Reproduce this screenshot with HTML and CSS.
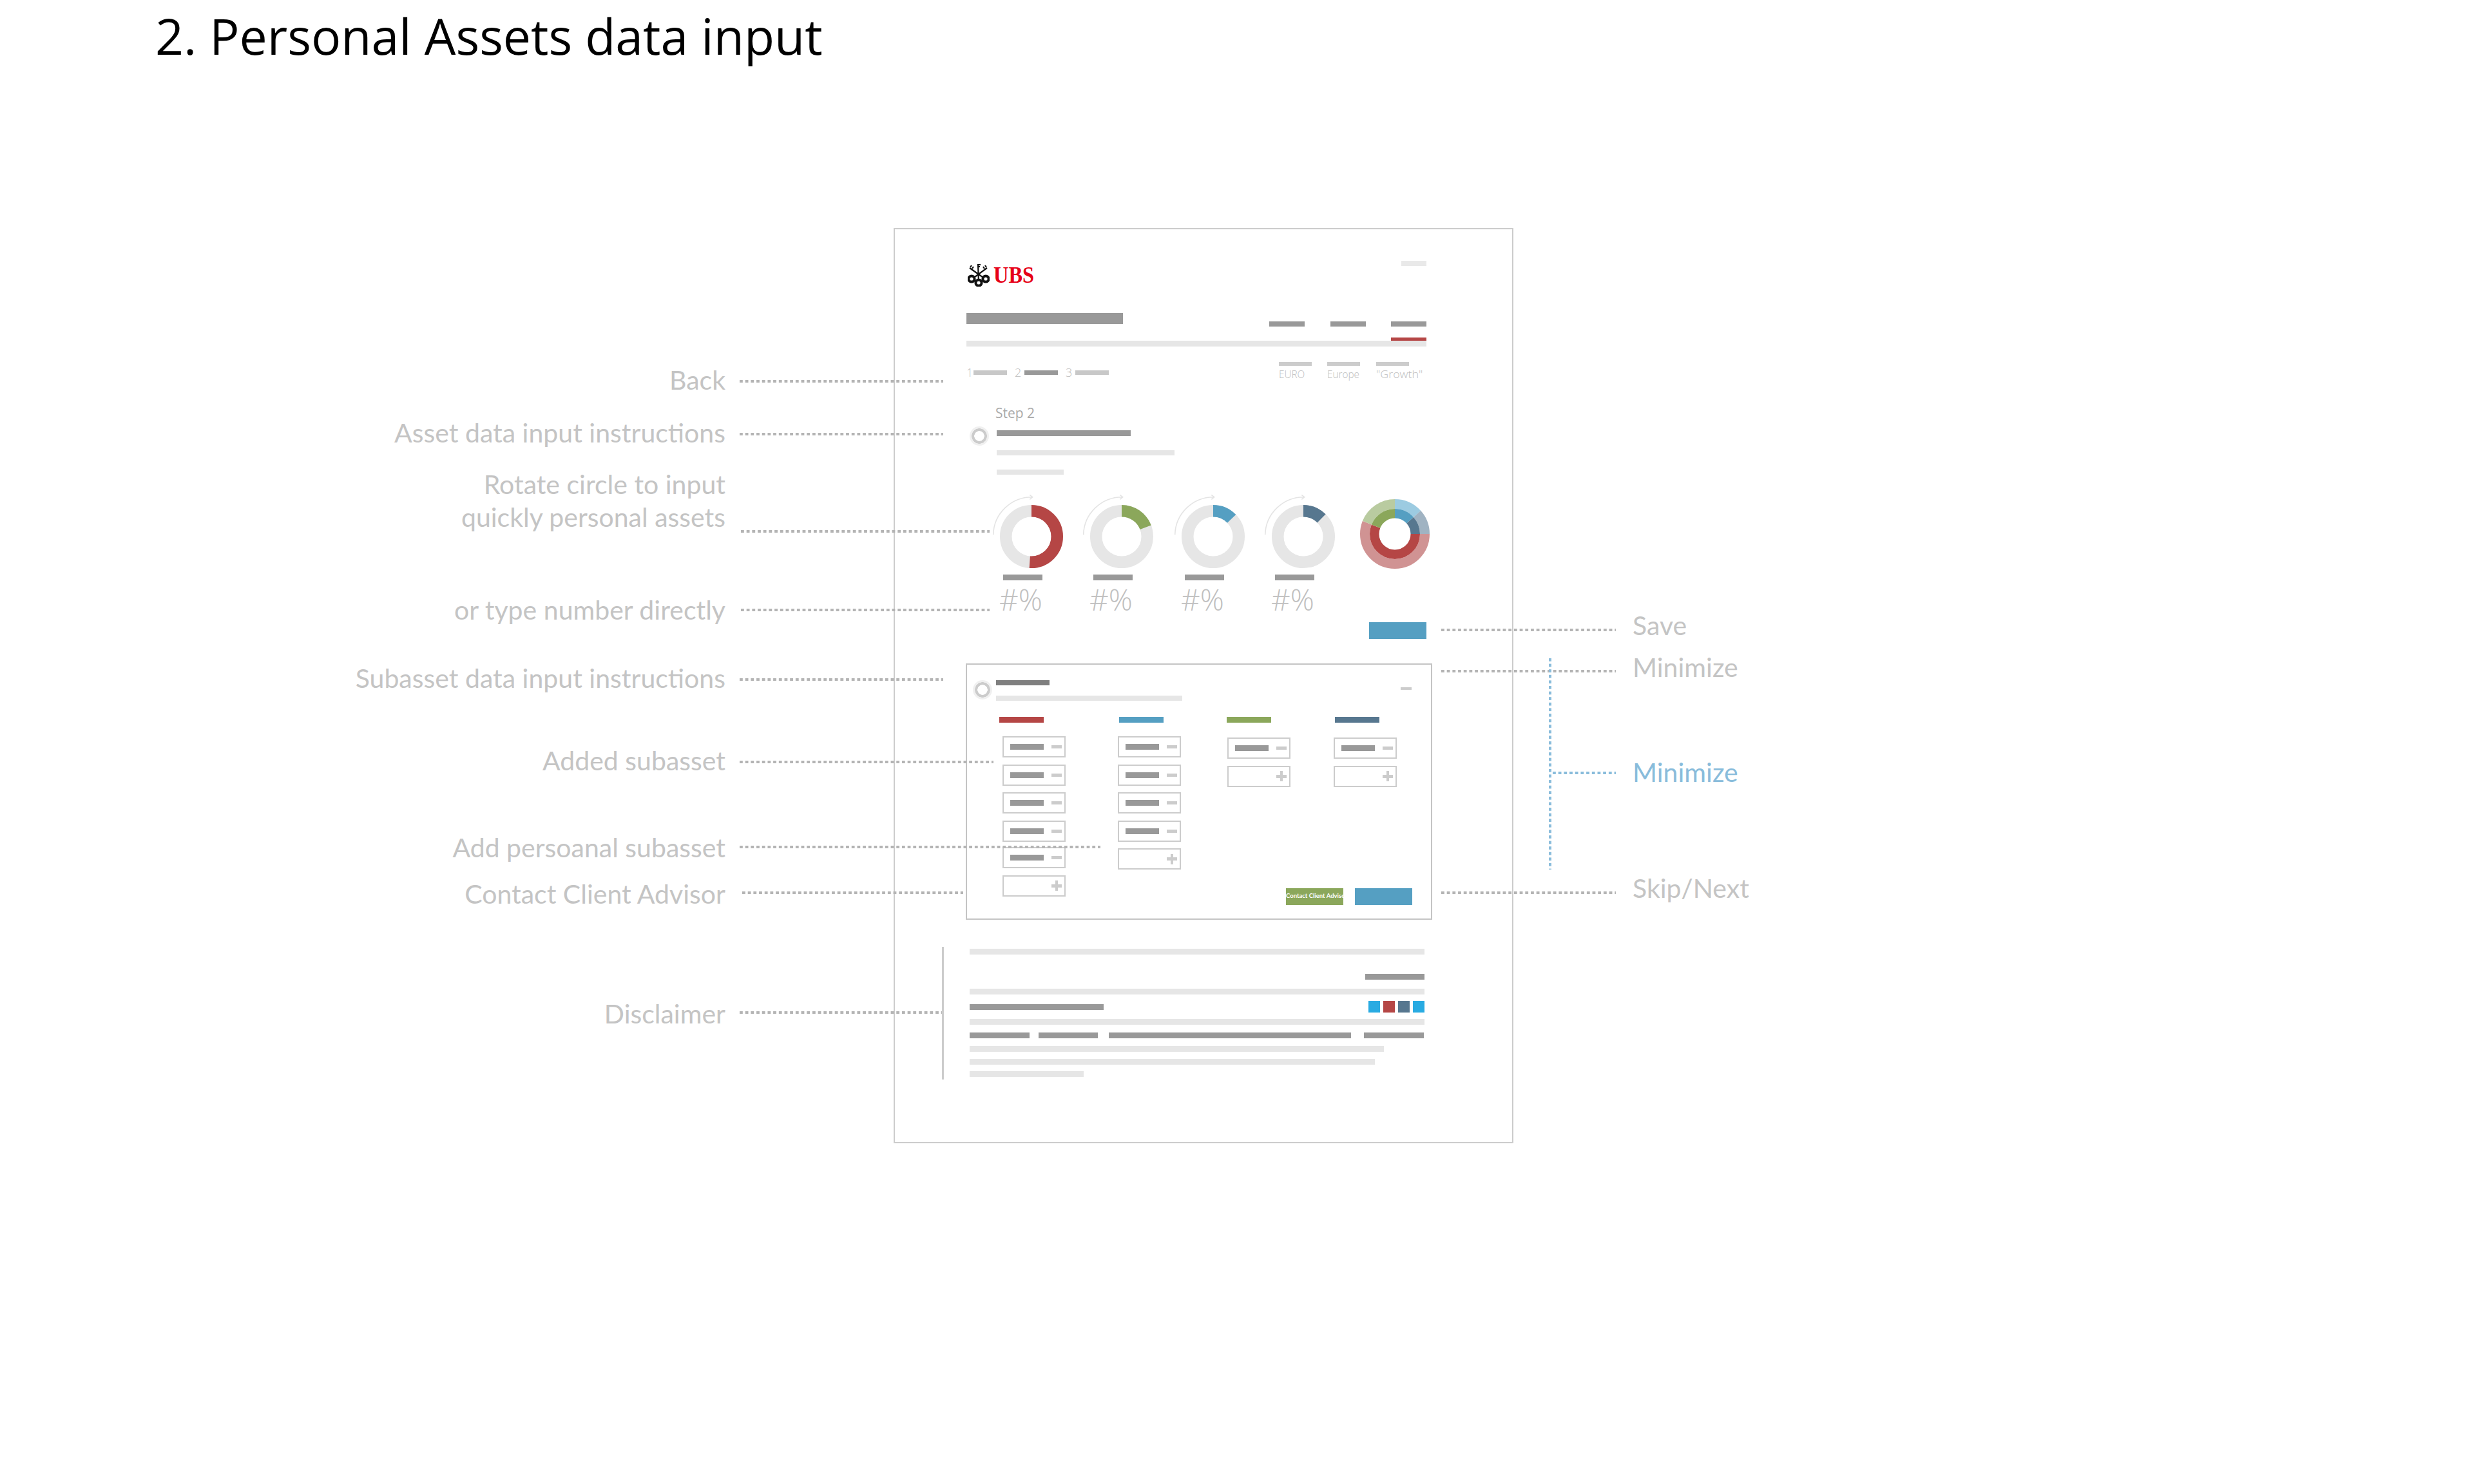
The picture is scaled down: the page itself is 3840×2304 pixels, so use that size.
FILE: index.html
```html
<!DOCTYPE html>
<html lang="en">
<head>
<meta charset="utf-8">
<title>2. Personal Assets data input</title>
<link rel="stylesheet" href="styles.css">
</head>
<body>
<main class="canvas">
  <h1 class="title">2. Personal Assets data input</h1>

  <section class="sheet">
    <header class="brand-row">
      <div class="logo">
        <svg class="keys" viewBox="0 0 34 36" aria-hidden="true">
          <g class="key-shaft">
            <path d="M7 24 30 7M27 24 3 7M17 30 16 1"/>
            <path d="M16 2h4M16 5h3M27 3l2 3M24 5l2 3M6 3 4 6M9 5 7 8"/>
          </g>
          <g class="key-bow">
            <circle cx="6" cy="24" r="4.6"/>
            <circle cx="28" cy="24" r="4.6"/>
            <circle cx="17" cy="30" r="4.6"/>
          </g>
        </svg>
        <span class="logo-word">UBS</span>
      </div>
      <span class="chip"></span>
    </header>

    <div class="head-row">
      <span class="bar bar-title"></span>
      <nav class="tabs">
        <div class="tab"><span class="bar bar-tab"></span></div>
        <div class="tab"><span class="bar bar-tab"></span></div>
        <div class="tab tab-active"><span class="bar bar-tab"></span></div>
      </nav>
    </div>
    <div class="rule"></div>

    <div class="meta-row">
      <ol class="steps">
        <li class="step"><span class="num num-first">1</span><span class="step-bar"></span></li>
        <li class="step"><span class="num">2</span><span class="step-bar step-bar-on"></span></li>
        <li class="step"><span class="num">3</span><span class="step-bar"></span></li>
      </ol>
      <div class="meta">
        <div class="meta-item"><span class="meta-bar"></span><span class="meta-text">EURO</span></div>
        <div class="meta-item"><span class="meta-bar"></span><span class="meta-text">Europe</span></div>
        <div class="meta-item"><span class="meta-bar"></span><span class="meta-text meta-text-wide">"Growth"</span></div>
      </div>
    </div>

    <p class="step-label">Step 2</p>
    <div class="instr">
      <span class="radio"></span>
      <div class="instr-lines">
        <span class="bar bar-i1"></span>
        <span class="line line-i2"></span>
        <span class="line line-i3"></span>
      </div>
    </div>

    <div class="donuts">
      <figure class="donut-card">
        <svg class="donut" viewBox="-49 -49 98 98" aria-hidden="true">
          <path class="turn" d="M-59.3-2.7A60 60 0 0 1 1.7-61.3M-2.7-64.7 1.7-61.3-2.7-57.7"/>
          <g transform="rotate(-90)">
            <circle class="ring track" r="39.75"/>
            <circle class="ring c-red" r="39.75" pathLength="360" stroke-dasharray="184 360"/>
          </g>
        </svg>
        <span class="bar bar-donut"></span>
        <span class="pct">#%</span>
      </figure>
      <figure class="donut-card card-2">
        <svg class="donut" viewBox="-49 -49 98 98" aria-hidden="true">
          <path class="turn" d="M-59.3-2.7A60 60 0 0 1 1.7-61.3M-2.7-64.7 1.7-61.3-2.7-57.7"/>
          <g transform="rotate(-90)">
            <circle class="ring track" r="39.75"/>
            <circle class="ring c-green" r="39.75" pathLength="360" stroke-dasharray="69 360"/>
          </g>
        </svg>
        <span class="bar bar-donut"></span>
        <span class="pct">#%</span>
      </figure>
      <figure class="donut-card card-3">
        <svg class="donut" viewBox="-49 -49 98 98" aria-hidden="true">
          <path class="turn" d="M-59.3-2.7A60 60 0 0 1 1.7-61.3M-2.7-64.7 1.7-61.3-2.7-57.7"/>
          <g transform="rotate(-90)">
            <circle class="ring track" r="39.75"/>
            <circle class="ring c-blue" r="39.75" pathLength="360" stroke-dasharray="46 360"/>
          </g>
        </svg>
        <span class="bar bar-donut"></span>
        <span class="pct">#%</span>
      </figure>
      <figure class="donut-card card-4">
        <svg class="donut" viewBox="-49 -49 98 98" aria-hidden="true">
          <path class="turn" d="M-59.3-2.7A60 60 0 0 1 1.7-61.3M-2.7-64.7 1.7-61.3-2.7-57.7"/>
          <g transform="rotate(-90)">
            <circle class="ring track" r="39.75"/>
            <circle class="ring c-slate" r="39.75" pathLength="360" stroke-dasharray="45 360"/>
          </g>
        </svg>
        <span class="bar bar-donut"></span>
        <span class="pct">#%</span>
      </figure>
      <svg class="summary" viewBox="-54 -54 108 108" aria-hidden="true">
        <g transform="rotate(-90)">
          <circle class="arc-out c-blue-soft" r="46.5" pathLength="360" stroke-dasharray="48 312"/>
          <circle class="arc-out c-slate-soft" r="46.5" pathLength="360" stroke-dasharray="42 318" stroke-dashoffset="-48"/>
          <circle class="arc-out c-red-soft" r="46.5" pathLength="360" stroke-dasharray="202 158" stroke-dashoffset="-90"/>
          <circle class="arc-out c-green-soft" r="46.5" pathLength="360" stroke-dasharray="68 292" stroke-dashoffset="-292"/>
          <circle class="arc-in c-blue" r="31.75" pathLength="360" stroke-dasharray="48 312"/>
          <circle class="arc-in c-slate" r="31.75" pathLength="360" stroke-dasharray="42 318" stroke-dashoffset="-48"/>
          <circle class="arc-in c-red" r="31.75" pathLength="360" stroke-dasharray="202 158" stroke-dashoffset="-90"/>
          <circle class="arc-in c-green" r="31.75" pathLength="360" stroke-dasharray="68 292" stroke-dashoffset="-292"/>
        </g>
      </svg>
    </div>

    <div class="save-row"><span class="btn btn-save"></span></div>

    <section class="panel">
      <div class="panel-head">
        <span class="radio"></span>
        <div class="panel-lines">
          <span class="bar bar-p1"></span>
          <span class="line line-p2"></span>
        </div>
        <span class="minimize"></span>
      </div>
      <div class="cols">
        <div class="col col-1">
          <span class="col-head h-red"></span>
          <div class="fields">
            <div class="field"><span class="field-bar"></span><span class="field-minus"></span></div>
            <div class="field"><span class="field-bar"></span><span class="field-minus"></span></div>
            <div class="field"><span class="field-bar"></span><span class="field-minus"></span></div>
            <div class="field"><span class="field-bar"></span><span class="field-minus"></span></div>
            <div class="field field-nudge"><span class="field-bar"></span><span class="field-minus"></span></div>
            <div class="field"><span class="field-plus"></span></div>
          </div>
        </div>
        <div class="col col-2">
          <span class="col-head h-blue"></span>
          <div class="fields">
            <div class="field"><span class="field-bar"></span><span class="field-minus"></span></div>
            <div class="field"><span class="field-bar"></span><span class="field-minus"></span></div>
            <div class="field"><span class="field-bar"></span><span class="field-minus"></span></div>
            <div class="field"><span class="field-bar"></span><span class="field-minus"></span></div>
            <div class="field"><span class="field-plus"></span></div>
          </div>
        </div>
        <div class="col col-3">
          <span class="col-head h-green"></span>
          <div class="fields fields-low">
            <div class="field"><span class="field-bar"></span><span class="field-minus"></span></div>
            <div class="field"><span class="field-plus"></span></div>
          </div>
        </div>
        <div class="col col-4">
          <span class="col-head h-slate"></span>
          <div class="fields fields-low">
            <div class="field"><span class="field-bar"></span><span class="field-minus"></span></div>
            <div class="field"><span class="field-plus"></span></div>
          </div>
          <div class="actions">
            <span class="btn btn-contact">Contact Client Advisor</span>
            <span class="btn btn-next"></span>
          </div>
        </div>
      </div>
    </section>

    <footer class="legal">
      <span class="line line-full"></span>
      <div class="legal-right mt-30"><span class="bar bar-l-short"></span></div>
      <span class="line line-full mt-14"></span>
      <div class="legal-brand mt-10">
        <span class="bar bar-l-long"></span>
        <div class="swatches">
          <span class="swatch s-cyan"></span>
          <span class="swatch s-red"></span>
          <span class="swatch s-slate"></span>
          <span class="swatch s-cyan"></span>
        </div>
      </div>
      <span class="line line-full mt-10"></span>
      <div class="legal-links mt-12">
        <span class="bar bar-l-short"></span>
        <span class="bar bar-l-short"></span>
        <span class="bar bar-l-wide"></span>
        <span class="bar bar-l-short"></span>
      </div>
      <span class="line line-a mt-12"></span>
      <span class="line line-b mt-11"></span>
      <span class="line line-c mt-10"></span>
    </footer>
  </section>

  <div class="callout left c-back"><span class="txt">Back</span><i class="dots"></i></div>
  <div class="callout left c-asset"><span class="txt">Asset data input instructions</span><i class="dots"></i></div>
  <div class="callout left c-rotate"><span class="txt">Rotate circle to input<br>quickly personal assets</span><i class="dots"></i></div>
  <div class="callout left c-type"><span class="txt">or type number directly</span><i class="dots"></i></div>
  <div class="callout left c-sub"><span class="txt">Subasset data input instructions</span><i class="dots"></i></div>
  <div class="callout left c-added"><span class="txt">Added subasset</span><i class="dots"></i></div>
  <div class="callout left c-addp"><span class="txt">Add persoanal subasset</span><i class="dots"></i></div>
  <div class="callout left c-contact"><span class="txt">Contact Client Advisor</span><i class="dots"></i></div>
  <div class="callout left c-disc"><span class="txt">Disclaimer</span><i class="dots"></i></div>

  <div class="callout right c-save"><i class="dots"></i><span class="txt">Save</span></div>
  <div class="callout right c-min"><i class="dots"></i><span class="txt">Minimize</span></div>
  <div class="callout right blue c-min2"><i class="dots"></i><span class="txt">Minimize</span></div>
  <div class="callout right c-skip"><i class="dots"></i><span class="txt">Skip/Next</span></div>
  <i class="bracket"></i>
</main>
</body>
</html>
```

FILE: styles.css
```css
* { box-sizing: border-box; }
html, body { margin: 0; padding: 0; background: #fff; }
.canvas {
  position: relative;
  width: 3840px;
  height: 2304px;
  overflow: hidden;
  font-family: "Open Sans", "Noto Sans", sans-serif;
}
.title {
  margin: 0;
  padding: 3px 0 0 241px;
  font-size: 77px;
  line-height: 105px;
  font-weight: 400;
  color: #000;
}

/* wireframe sheet */
.sheet {
  width: 962px;
  height: 1421px;
  margin: 246px 0 0 1387px;
  padding: 49px 133px 0 111px;
  border: 2px solid #ccc;
}
.brand-row { display: flex; justify-content: space-between; height: 40px; }
.logo { display: flex; align-items: center; height: 36px; margin: 4px 0 0 2px; }
.keys { width: 34px; height: 36px; flex: none; }
.key-shaft path { fill: none; stroke: #111; stroke-width: 2.2; }
.key-bow circle { fill: #fff; stroke: #111; stroke-width: 4; }
.logo-word {
  margin-left: 6px;
  font-family: "Liberation Serif", serif;
  font-weight: 700;
  font-size: 36px;
  line-height: 36px;
  color: #e60018;
  transform: scaleX(.9);
  transform-origin: left center;
}
.chip { width: 39px; height: 8px; background: #e9e9e9; }

.bar { display: block; height: 9px; background: #999; }
.line { display: block; height: 9px; background: #e6e6e6; }

.head-row { display: flex; justify-content: space-between; margin-top: 41px; height: 43px; }
.bar-title { width: 243px; height: 17px; }
.tabs { display: flex; gap: 39.5px; margin-top: 13px; }
.tab { width: 55px; }
.bar-tab { height: 8px; }
.tab-active::after { content: ""; display: block; height: 5px; margin-top: 17px; background: #b54645; }
.rule { height: 9px; background: #e6e6e6; }

.meta-row { display: flex; justify-content: space-between; margin-top: 24px; }
.steps { display: flex; gap: 12px; list-style: none; margin: 6px 0 0; padding: 0; height: 20px; }
.step { display: flex; align-items: center; }
.num { width: 15px; font-size: 18px; line-height: 20px; font-weight: 300; color: #bdbdbd; }
.num-first { width: 11px; }
.step-bar { width: 52px; height: 7px; background: #c8c8c8; }
.step-bar-on { background: #999; }
.meta { display: grid; grid-template-columns: 75px 76px 78px; }
.meta-item { display: flex; flex-direction: column; }
.meta-bar { width: 51px; height: 6px; background: #ccc; }
.meta-text { margin-top: 3px; font-size: 17px; line-height: 20px; font-weight: 300; color: #bdbdbd; transform: scaleX(.9); transform-origin: left; white-space: nowrap; }
.meta-text-wide { transform: scaleX(1.05); }

.step-label { margin: 37px 0 0 45px; font-size: 21px; line-height: 26px; color: #aaa; font-weight: 400; }
.instr { display: flex; margin-top: 8px; }
.radio {
  flex: none;
  width: 30px;
  height: 30px;
  margin-left: 5px;
  border-radius: 50%;
  background: radial-gradient(circle, #fff 0 7.5px, #ccc 8px 11.5px, #f0f0f0 12px);
}
.instr-lines { display: flex; flex-direction: column; margin: 6px 0 0 12px; }
.bar-i1 { width: 208px; }
.line-i2 { width: 276px; height: 8px; margin-top: 22px; }
.line-i3 { width: 104px; height: 8px; margin-top: 22px; }

.donuts { display: flex; margin-top: 47px; margin-left: 52px; height: 171px; }
.donut-card { width: 98px; margin: 0; }
.card-2 { margin-left: 42px; }
.card-3 { margin-left: 44px; }
.card-4 { margin-left: 42px; }
.donut { display: block; width: 98px; height: 98px; overflow: visible; }
.turn { fill: none; stroke: #e4e4e4; stroke-width: 1.6; }
.ring { fill: none; stroke-width: 18.5; }
.track { stroke: #e6e6e6; }
.c-red { stroke: #b54645; }
.c-green { stroke: #8ba75b; }
.c-blue { stroke: #559fc2; }
.c-slate { stroke: #57778f; }
.c-red-soft { stroke: #d09393; }
.c-green-soft { stroke: #b9cba0; }
.c-blue-soft { stroke: #9ccbe1; }
.c-slate-soft { stroke: #a0b3c2; }
.bar-donut { width: 61px; margin: 10px 0 0 5px; }
.pct { display: block; margin: 5px 0 0 -1px; font-size: 46px; line-height: 49px; font-weight: 300; color: #c0c0c0; }
.summary { width: 108px; height: 108px; margin: -9px 0 0 39px; flex: none; }
.arc-out { fill: none; stroke-width: 15; }
.arc-in { fill: none; stroke-width: 14.5; }

.btn { display: block; }
.save-row { display: flex; justify-content: flex-end; margin-top: 11px; }
.btn-save { width: 89px; height: 26px; background: #559fc2; }

/* sub-asset panel */
.panel {
  display: flex;
  flex-direction: column;
  width: 724px;
  height: 398px;
  margin: 38px 0 0 -1px;
  padding-top: 24px;
  border: 2px solid #c4c4c4;
}
.panel-head { display: flex; }
.panel-head .radio { margin-left: 8.5px; }
.panel-lines { display: flex; flex-direction: column; margin-left: 6.5px; }
.bar-p1 { width: 82.5px; height: 8px; background: #7f7f7f; }
.line-p2 { width: 289px; height: 8px; margin-top: 16px; }
.minimize { width: 17px; height: 4px; margin: 11px 30px 0 auto; background: #ccc; }

.cols { display: flex; flex: 1; margin-top: 25px; padding-left: 50px; }
.col { display: flex; flex-direction: column; }
.col-1 { width: 183.6px; }
.col-2 { width: 169.4px; }
.col-3 { width: 166px; }
.col-4 { width: 151px; }
.col-head { display: block; width: 69px; height: 9px; }
.col-2 .col-head { margin-left: 2.4px; }
.col-4 .col-head { margin-left: 2px; }
.h-red { background: #b54645; }
.h-blue { background: #559fc2; }
.h-green { background: #8ba75b; }
.h-slate { background: #57778f; }
.fields { display: flex; flex-direction: column; gap: 10.5px; margin-top: 21px; }
.fields-low { margin-top: 23px; }
.col-1 .fields { margin-left: 4.5px; }
.col-3 .fields { margin-left: 1px; }
.field {
  display: flex;
  align-items: center;
  width: 98.5px;
  height: 33px;
  padding: 0 4px 0 10px;
  border: 2px solid #ccc;
}
.field-nudge { margin-top: -2px; }
.field-bar { width: 52.5px; height: 9px; background: #999; }
.field-minus { width: 16px; height: 5px; margin-left: 12px; background: #ccc; }
.field-plus {
  width: 16px;
  height: 16px;
  margin-left: auto;
  background:
    linear-gradient(#ccc, #ccc) center / 16px 5px no-repeat,
    linear-gradient(#ccc, #ccc) center / 4px 16px no-repeat;
}
.actions { display: flex; gap: 18px; width: 196px; margin: auto 0 21px -74px; }
.btn-contact {
  width: 89px;
  height: 26px;
  background: #8ba75b;
  color: #fff;
  font-family: Lato, "Open Sans", sans-serif;
  font-size: 9.5px;
  line-height: 24px;
  font-weight: 700;
  text-align: center;
  white-space: nowrap;
}
.btn-next { width: 89px; height: 26px; background: #559fc2; }

/* disclaimer */
.legal {
  display: flex;
  flex-direction: column;
  width: 752px;
  height: 206px;
  margin: 42px 0 0 -38px;
  padding: 3px 0 0 40px;
  border-left: 3px solid #ccc;
}
.line-full { width: 706px; }
.legal-right { display: flex; justify-content: flex-end; width: 706px; }
.bar-l-short { width: 92.5px; }
.legal-brand { display: flex; justify-content: space-between; align-items: center; width: 706px; }
.bar-l-long { width: 208px; }
.swatches { display: flex; gap: 5px; }
.swatch { width: 18px; height: 18px; }
.s-cyan { background: #29abe2; }
.s-red { background: #b54645; }
.s-slate { background: #57778f; }
.legal-links { display: flex; width: 706px; }
.legal-links .bar:nth-child(2) { margin-left: 14px; }
.bar-l-wide { width: 376px; margin-left: 17px; }
.legal-links .bar:nth-child(4) { margin-left: 20px; }
.line-a { width: 643px; }
.line-b { width: 629px; }
.line-c { width: 177px; }
.mt-10 { margin-top: 10px; }
.mt-11 { margin-top: 11px; }
.mt-12 { margin-top: 12px; }
.mt-14 { margin-top: 14px; }
.mt-30 { margin-top: 30px; }

/* annotation callouts on the free canvas */
.callout { position: absolute; display: flex; font-family: Lato, "Open Sans", sans-serif; font-weight: 400; font-size: 41px; line-height: 51px; color: #c4c4c4; white-space: nowrap; }
.callout.left { left: 0; top: var(--top); }
.callout.left .txt { width: 1126px; text-align: right; }
.callout.left .dots { margin-left: var(--gap, 22px); }
.callout.right { left: 2237px; top: var(--top); }
.callout.right .txt { position: absolute; left: 297px; top: 0; }
.dots {
  display: block;
  flex: none;
  width: var(--len);
  height: 4px;
  margin-top: var(--y);
  background: linear-gradient(90deg, #b4b4b4 0 4.5px, transparent 4.5px) 0 0 / 8.7px 100% repeat-x;
}
.c-back { --top: 564px; --len: 316px; --y: 26px; }
.c-asset { --top: 646px; --len: 316px; --y: 26px; }
.c-rotate { --top: 726px; --len: 386px; --gap: 24px; --y: 97px; }
.c-type { --top: 921px; --len: 386px; --gap: 24px; --y: 24px; }
.c-sub { --top: 1027px; --len: 316px; --y: 26px; }
.c-added { --top: 1155px; --len: 394px; --y: 26px; }
.c-addp { --top: 1290px; --len: 560px; --y: 23px; }
.c-contact { --top: 1362px; --len: 343px; --gap: 26px; --y: 22px; }
.c-disc { --top: 1548px; --len: 314px; --y: 22px; }
.c-save { --top: 945px; --len: 271px; --y: 31px; }
.c-min { --top: 1010px; --len: 271px; --y: 30px; }
.c-skip { --top: 1353px; --len: 271px; --y: 31px; }
.callout.blue { left: 2410px; top: 1173px; color: #89bcdb; --len: 98px; --y: 25px; }
.callout.blue .txt { left: 124px; }
.callout.blue .dots { background-image: linear-gradient(90deg, #89bcdb 0 4.5px, transparent 4.5px); }
.bracket {
  position: absolute;
  left: 2404px;
  top: 1022px;
  width: 4px;
  height: 328px;
  background: linear-gradient(#89bcdb 0 4.5px, transparent 4.5px) 0 0 / 100% 8.6px repeat-y;
}
```
